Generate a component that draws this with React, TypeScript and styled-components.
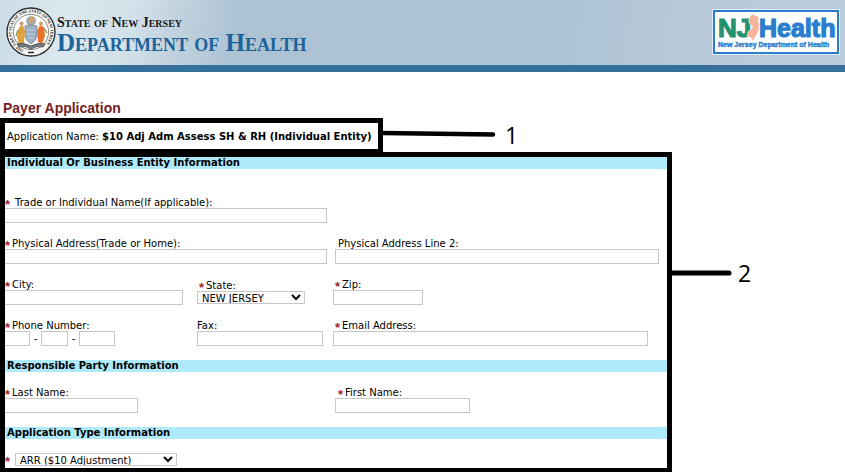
import React from "react";
import styled, { createGlobalStyle } from "styled-components";

const GlobalStyle = createGlobalStyle`
  *, *::before, *::after { box-sizing: border-box; }
  body {
    margin: 0;
    background: #fff;
    color: #000;
    font: 10px/12px Verdana, "DejaVu Sans", sans-serif;
  }
`;

const Masthead = styled.header`
  display: flex;
  align-items: center;
  justify-content: space-between;
  height: 72px;
  padding: 0 5px 2px 6px;
  border-bottom: 7px solid #35709b;
  background: linear-gradient(100deg, #cbdce5 0%, #dce8ee 8%, #d2e0e8 16%, #c2d3df 21%, #adc3d4 28%, #adc3d4 66%, #b9cbda 84%, #bbcddb 100%);
`;

const Brand = styled.div`
  display: flex;
  align-items: center;
  gap: 1px;
`;

const BrandText = styled.div`
  padding-top: 6px;
  font-family: "Liberation Serif", serif;
  font-variant: small-caps;
  white-space: nowrap;
`;

const StateName = styled.div`
  color: #16181c;
  font-size: 14px;
  font-weight: bold;
  line-height: 16px;
`;

const DepartmentName = styled.div`
  color: #1c639a;
  font-size: 25px;
  font-weight: bold;
  line-height: 24px;
`;

const Main = styled.main`
  padding-top: 28px;
`;

const Title = styled.h1`
  margin: 0;
  padding: 0 3px 2px;
  color: #74231f;
  font: bold 14px/16px "Liberation Sans", Arial, sans-serif;
`;

const AnnotatedRow = styled.div`
  display: flex;
  align-items: flex-start;
`;

const NameFrame = styled.div`
  flex: 0 1 383px;
  padding: 8px 2px 6px;
  border: 5px solid #000;
  white-space: nowrap;
`;

const FormFrame = styled.form`
  flex: 0 1 672px;
  min-width: 0;
  margin-top: -2px;
  border: 5px solid #000;
  border-bottom-width: 4px;
`;

const Callout = styled.div<{ $top: number }>`
  display: flex;
  align-items: center;
  gap: 6px;
  margin-top: ${(p) => p.$top}px;
  font: 23px/24px "Open Sans", "Noto Sans", sans-serif;
`;

const SectionTitle = styled.h2`
  margin: 0;
  padding: 0 2px;
  background: #afeafa;
  font-size: 10px;
  line-height: 12px;
`;

const Section = styled.div<{ $top?: number; $bottom?: number }>`
  display: grid;
  row-gap: 14px;
  padding: ${(p) => p.$top ?? 14}px 0 ${(p) => p.$bottom ?? 14}px;
`;

const templates = {
  halves: "330px minmax(0, 1fr)",
  thirds: "192px 136px minmax(0, 1fr)",
};

const FieldRow = styled.div<{ $layout: keyof typeof templates }>`
  display: grid;
  grid-template-columns: ${(p) => templates[p.$layout]};
`;

const Field = styled.div`
  display: flex;
  flex-direction: column;
  min-width: 0;
`;

const Label = styled.label<{ $indent?: number }>`
  display: flex;
  height: 12px;
  padding-left: ${(p) => p.$indent ?? 0}px;
  line-height: 14px;
  white-space: nowrap;
`;

const Star = styled.span<{ $wide?: boolean }>`
  flex: none;
  width: ${(p) => (p.$wide ? 10 : 7)}px;
  color: #a3242c;
  font: bold 13px/18px "Liberation Sans", Arial, sans-serif;
`;

const TextInput = styled.input<{ $w: number; $open?: boolean }>`
  width: 100%;
  max-width: ${(p) => p.$w}px;
  height: 15px;
  margin: 0;
  padding: 0 3px;
  border: 1px solid #c6c6c6;
  border-left-width: ${(p) => (p.$open ? 0 : 1)}px;
  border-radius: 0;
  background: #fff;
  font: inherit;
`;

const Select = styled.select<{ $w: number }>`
  width: 100%;
  max-width: ${(p) => p.$w}px;
  height: 13px;
  margin: 0;
  padding: 0;
  border: 1px solid #c6c6c6;
  border-radius: 0;
  background-color: #fff;
  color: #000;
  font: inherit;
`;

const StateField = styled(Field)`
  padding-top: 1px;
`;

const PhoneParts = styled.div`
  display: flex;
  align-items: center;
`;

const Dash = styled.span`
  width: 11px;
  text-align: center;
`;

const TypeRow = styled.div`
  display: flex;
`;

function StateSeal() {
  return (
    <svg width="50" height="52" viewBox="0 0 50 52" role="img" aria-label="State seal">
      <defs>
        <path id="sealRing" d="M18 44 A19.5 19.5 0 1 1 32 44" />
      </defs>
      <circle cx="25" cy="26" r="24" fill="#f6f5f1" stroke="#30343a" strokeWidth="1.4" />
      <circle cx="25" cy="26" r="17.6" fill="#fff" stroke="#6d6d6d" strokeWidth="0.8" />
      <text fontFamily="Liberation Serif, serif" fontSize="4" fontWeight="bold" fill="#1d1d1d">
        <textPath href="#sealRing">THE GREAT SEAL OF THE STATE OF NEW JERSEY</textPath>
      </text>
      <path d="M20 16 Q20 11 25 10 Q31 11 30 16 L28 19 H22 Z" fill="#a5a9ae" />
      <path d="M23 12 L27 10 L28 15 L24 17 Z" fill="#d9a565" />
      <path d="M19 20 Q25 18 31 20 V30 Q30 35 25 38 Q20 35 19 30 Z" fill="#9db0c4" stroke="#7b8794" strokeWidth="0.8" />
      <path d="M21 24 H29 M21 28 H29 M22 32 H28" stroke="#c7d1da" strokeWidth="1.2" />
      <path d="M13 21 L17 19 L19 25 L18 37 L13 39 L11 31 Z" fill="#e0a23c" />
      <path d="M34 19 L38 21 L39 30 L36 38 L32 36 L31 25 Z" fill="#e8742c" />
      <circle cx="15.5" cy="17.5" r="2" fill="#c99c72" />
      <circle cx="35" cy="17.5" r="2" fill="#c99c72" />
      <path d="M38 22 L41 27 M12 24 L10 30" stroke="#7e8c59" strokeWidth="1.3" />
      <path d="M11 38 Q18 36 25 40 Q32 36 39 38 L37 41 Q31 39 25 43 Q19 39 13 41 Z" fill="#777d80" stroke="#33383c" strokeWidth="0.7" />
      <path d="M22 46.5 H28" stroke="#222" strokeWidth="1.4" />
    </svg>
  );
}

function HealthLogo() {
  return (
    <svg width="128" height="46" viewBox="0 0 128 46" role="img" aria-label="NJ Health, New Jersey Department of Health">
      <rect width="128" height="46" fill="#dfeaf3" />
      <rect x="2" y="2" width="124" height="42" fill="#fff" stroke="#2b7dce" strokeWidth="2" />
      <g fontFamily="Liberation Sans, Arial, sans-serif" fontWeight="bold">
        <text x="6" y="28" fontSize="26" fill="#249370" stroke="#249370" strokeWidth="1.2">NJ</text>
        <text x="47" y="28" fontSize="25" fill="#2b7dce" stroke="#2b7dce" strokeWidth="1.2">Health</text>
        <path d="M40 5 L47 8 L46 13 L47.5 15 L47 21 L44 27 L41 32 L39 29 L35 27 L36 23 L41 18 L37 14 L37 9 Z" fill="#f4b49a" stroke="#fff" strokeWidth="0.5" />
        <text x="6" y="38" fontSize="7" fill="#2b7dce" stroke="#2b7dce" strokeWidth="0.4">New Jersey Department of Health</text>
      </g>
    </svg>
  );
}

interface TextFieldProps {
  id: string;
  label: string;
  width: number;
  required?: boolean;
  wideStar?: boolean;
  open?: boolean;
  indent?: number;
}

function TextField({ id, label, width, required, wideStar, open, indent }: TextFieldProps) {
  return (
    <Field>
      <Label htmlFor={id} $indent={indent}>
        {required && <Star $wide={wideStar}>*</Star>}
        {label}
      </Label>
      <TextInput id={id} type="text" $w={width} $open={open} />
    </Field>
  );
}

export default function App() {
  return (
    <>
      <GlobalStyle />
      <Masthead>
        <Brand>
          <StateSeal />
          <BrandText>
            <StateName>State of New Jersey</StateName>
            <DepartmentName>Department of Health</DepartmentName>
          </BrandText>
        </Brand>
        <HealthLogo />
      </Masthead>
      <Main>
        <Title>Payer Application</Title>
        <AnnotatedRow>
          <NameFrame>
            Application Name: <b>$10 Adj Adm Assess SH &amp; RH (Individual Entity)</b>
          </NameFrame>
          <Callout $top={5}>
            <svg width="116" height="10" viewBox="0 0 116 10" aria-hidden="true">
              <path d="M0 3 L110 4.5" stroke="#000" strokeWidth="4.5" strokeLinecap="round" />
            </svg>
            <span>1</span>
          </Callout>
        </AnnotatedRow>
        <AnnotatedRow>
          <FormFrame>
            <SectionTitle>Individual Or Business Entity Information</SectionTitle>
            <Section $top={27}>
              <FieldRow $layout="halves">
                <TextField id="trade" label="Trade or Individual Name(If applicable):" width={322} required wideStar open />
              </FieldRow>
              <FieldRow $layout="halves">
                <TextField id="address1" label="Physical Address(Trade or Home):" width={322} required open />
                <TextField id="address2" label="Physical Address Line 2:" width={324} indent={3} />
              </FieldRow>
              <FieldRow $layout="thirds">
                <TextField id="city" label="City:" width={178} required open />
                <StateField>
                  <Label htmlFor="state" $indent={2}>
                    <Star>*</Star>State:
                  </Label>
                  <Select id="state" $w={108}>
                    <option>NEW JERSEY</option>
                  </Select>
                </StateField>
                <TextField id="zip" label="Zip:" width={90} required indent={2} />
              </FieldRow>
              <FieldRow $layout="thirds">
                <Field>
                  <Label htmlFor="phone">
                    <Star>*</Star>Phone Number:
                  </Label>
                  <PhoneParts>
                    <TextInput id="phone" type="text" $w={25} $open />
                    <Dash>-</Dash>
                    <TextInput type="text" aria-label="Phone exchange" $w={27} />
                    <Dash>-</Dash>
                    <TextInput type="text" aria-label="Phone line number" $w={36} />
                  </PhoneParts>
                </Field>
                <TextField id="fax" label="Fax:" width={126} />
                <TextField id="email" label="Email Address:" width={315} required indent={2} />
              </FieldRow>
            </Section>
            <SectionTitle>Responsible Party Information</SectionTitle>
            <Section>
              <FieldRow $layout="halves">
                <TextField id="lastName" label="Last Name:" width={133} required open />
                <TextField id="firstName" label="First Name:" width={135} required indent={3} />
              </FieldRow>
            </Section>
            <SectionTitle>Application Type Information</SectionTitle>
            <Section $bottom={2}>
              <TypeRow>
                <Label htmlFor="type">
                  <Star $wide>*</Star>
                </Label>
                <Select id="type" aria-label="Application type" $w={162}>
                  <option>ARR ($10 Adjustment)</option>
                </Select>
              </TypeRow>
            </Section>
          </FormFrame>
          <Callout $top={107}>
            <svg width="60" height="10" viewBox="0 0 60 10" aria-hidden="true">
              <path d="M0 5 L57 5" stroke="#000" strokeWidth="5" strokeLinecap="round" />
            </svg>
            <span>2</span>
          </Callout>
        </AnnotatedRow>
      </Main>
    </>
  );
}
